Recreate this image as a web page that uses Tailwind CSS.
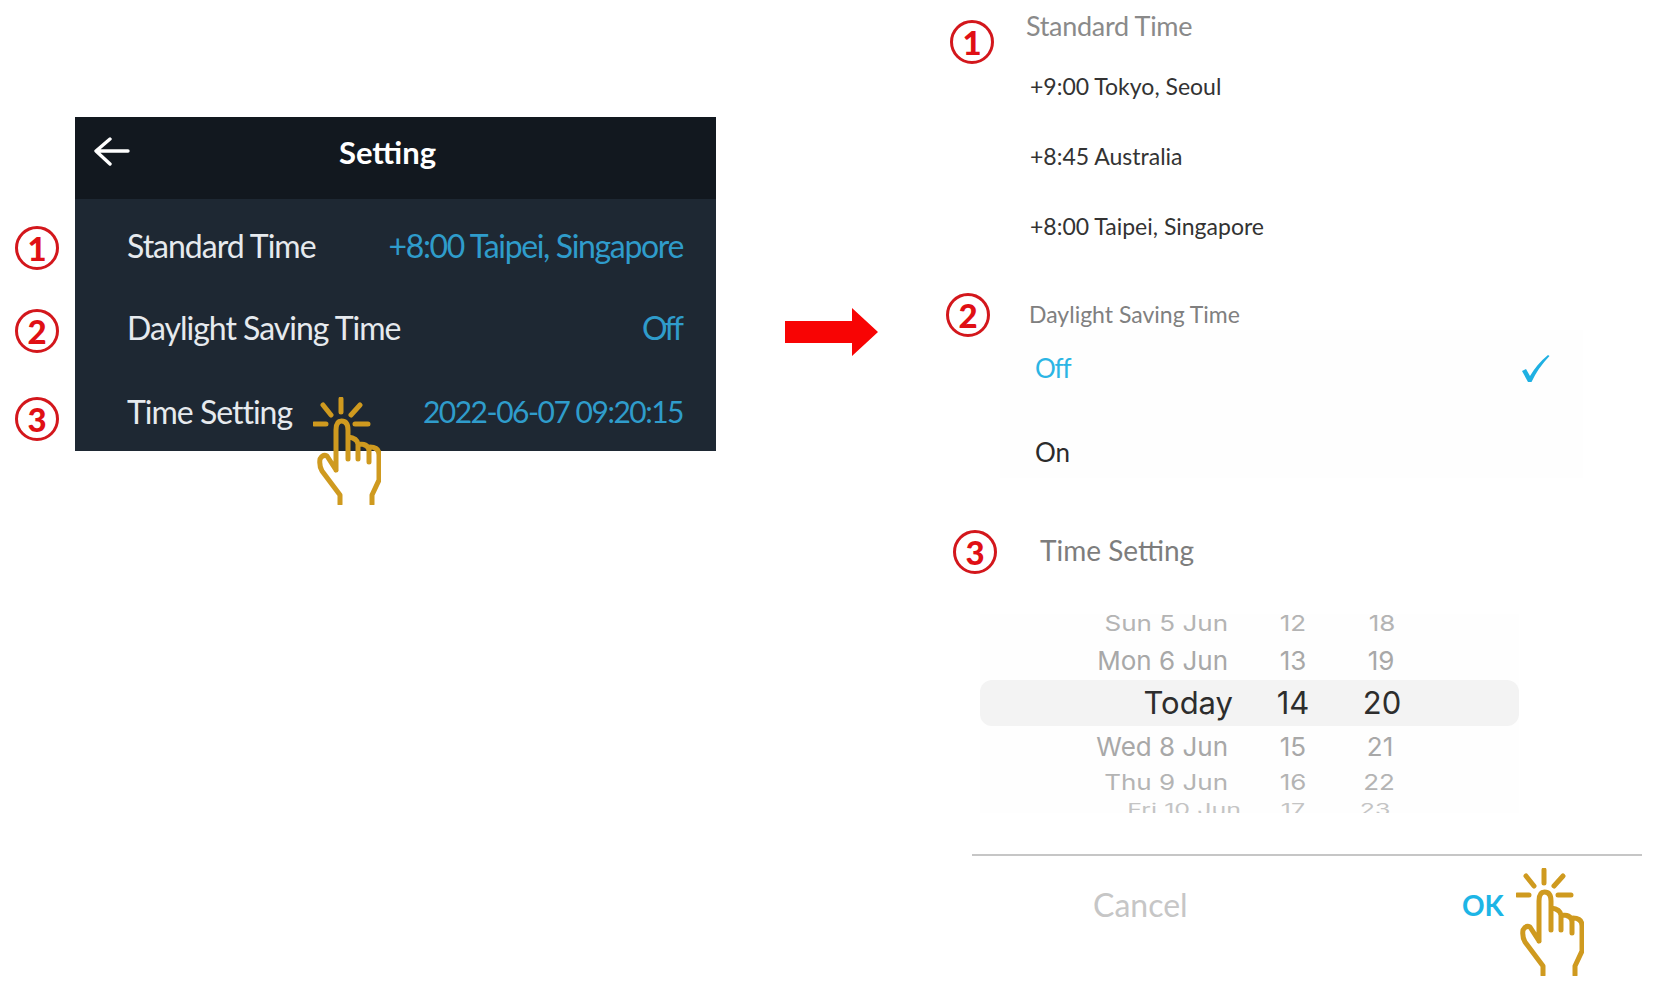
<!DOCTYPE html>
<html>
<head>
<meta charset="utf-8">
<script src="https://cdn.jsdelivr.net/npm/@tailwindcss/browser@4"></script>
</head>
<body class="bg-white">
<div class="relative w-[1660px] h-[996px] overflow-hidden flex bg-white font-['Lato',sans-serif]">

  <!-- Left: device screen -->
  <section class="w-[785px] shrink-0 pt-[117px] pl-[75px]">
    <div class="w-[641px] h-[334px] bg-[#1e2833]">
      <header class="relative h-[82px] bg-[#12181f] flex items-center justify-center pb-[12px] pr-[16px] text-white">
        <svg class="absolute left-[19px] top-[20px]" width="36" height="30" viewBox="0 0 36 30" fill="none" stroke="#ffffff" stroke-width="3.4" stroke-linecap="round" stroke-linejoin="round"><path d="M34 14H3M16 2 2 14l14 13"/></svg>
        <h1 class="text-[31px] font-bold leading-none">Setting</h1>
      </header>
      <div class="pt-[6px] pl-[52px] pr-[33px] text-[32px] tracking-[-1px]">
        <div class="relative h-[82px] flex items-center justify-between">
          <span class="absolute -left-[112px] top-[21px] w-[44px] h-[44px] rounded-full border-[3.5px] border-[#d3171c] flex items-center justify-center text-[#e00f14] text-[33px] font-black tracking-normal leading-none">1</span>
          <span class="text-[#e6eaee]">Standard Time</span>
          <span class="text-[#2f9ccb] tracking-[-1.35px]">+8:00 Taipei, Singapore</span>
        </div>
        <div class="relative h-[82px] flex items-center justify-between">
          <span class="absolute -left-[112px] top-[22px] w-[44px] h-[44px] rounded-full border-[3.5px] border-[#d3171c] flex items-center justify-center text-[#e00f14] text-[33px] font-black tracking-normal leading-none">2</span>
          <span class="text-[#e6eaee]">Daylight Saving Time</span>
          <span class="text-[#2f9ccb] tracking-[-3px] pr-[2px]">Off</span>
        </div>
        <div class="relative h-[85px] flex items-center justify-between">
          <span class="absolute -left-[112px] top-[28px] w-[44px] h-[44px] rounded-full border-[3.5px] border-[#d3171c] flex items-center justify-center text-[#e00f14] text-[33px] font-black tracking-normal leading-none">3</span>
          <span class="text-[#e6eaee]">Time Setting</span>
          <span class="text-[#2f9ccb] text-[30px] tracking-[-1.5px]">2022-06-07 09:20:15</span>
        </div>
      </div>
    </div>
  </section>

  <!-- Red arrow -->
  <div class="w-[161px] shrink-0 pt-[308px]">
    <svg width="93" height="48" viewBox="0 0 93 48"><path d="M0 13H67V0L93 24 67 48V35H0Z" fill="#f80404"/></svg>
  </div>

  <!-- Right: phone settings -->
  <section class="relative w-[714px] shrink-0">
    <div class="relative h-[52px] pl-[80px] flex items-center text-[27px] text-[#8a8a8a] tracking-[-0.3px]">
      <span class="absolute left-[4px] top-[20px] w-[44px] h-[44px] rounded-full border-[3.5px] border-[#d3171c] flex items-center justify-center text-[#e00f14] text-[33px] font-black tracking-normal leading-none">1</span>
      Standard Time
    </div>
    <ul class="pl-[84px] text-[23px] text-[#333333]">
      <li class="h-[70px] flex items-center pb-[2px]">+9:00 Tokyo, Seoul</li>
      <li class="h-[70px] flex items-center pb-[2px]">+8:45 Australia</li>
      <li class="h-[70px] flex items-center pb-[2px]">+8:00 Taipei, Singapore</li>
    </ul>

    <div class="relative mt-[38px] h-[30px] pl-[83px] flex items-center text-[23px] text-[#808080] pb-[2px]">
      <span class="absolute left-0 -top-[7px] w-[44px] h-[44px] rounded-full border-[3.5px] border-[#d3171c] flex items-center justify-center text-[#e00f14] text-[33px] font-black tracking-normal leading-none">2</span>
      Daylight Saving Time
    </div>
    <div class="ml-[54px] w-[583px] bg-[#fefefe] text-[26px]">
      <div class="h-[76px] pl-[35px] pr-[33px] flex items-center justify-between text-[#2bb5e4]">
        <span class="tracking-[-1.2px]">Off</span>
        <svg width="29" height="28" viewBox="0 0 29 28"><path d="M1 17 5 15 9 22Q16 10 27 1L28.500 2Q17 14 10.500 28H7Z" fill="#1fb0e2"/></svg>
      </div>
      <div class="h-[72px] pt-[20px] pl-[35px] flex items-center text-[#2b2b2b]">On</div>
    </div>

    <div class="relative mt-[52px] h-[40px] pl-[94px] flex items-center text-[28px] text-[#7d7d7d]">
      <span class="absolute left-[7px] top-0 w-[44px] h-[44px] rounded-full border-[3.5px] border-[#d3171c] flex items-center justify-center text-[#e00f14] text-[33px] font-black tracking-normal leading-none">3</span>
      Time Setting
    </div>

    <div class="relative mt-[44px] ml-[34px] w-[539px] h-[199px] overflow-hidden bg-[#fefefe] font-['Inter',sans-serif] text-[#a8a8a8]">
      <div class="absolute left-0 right-0 top-[66px] h-[46px] rounded-[12px] bg-[#f3f3f3]"></div>
      <div class="relative -mt-[5px]">
        <div class="grid grid-cols-[253px_120px_58px] h-[30px] pb-[13px] -translate-y-[5px] items-center text-[26px] text-[#b4b4b4] scale-y-[0.85]">
          <span class="text-right pr-[5px]">Sun 5 Jun</span><span class="text-center">12</span><span class="text-center">18</span>
        </div>
        <div class="grid grid-cols-[253px_120px_56px] h-[41px] pt-[2px] items-center text-[26px]">
          <span class="text-right pr-[5px]">Mon 6 Jun</span><span class="text-center">13</span><span class="text-center">19</span>
        </div>
        <div class="grid grid-cols-[253px_120px_58px] h-[46px] items-center text-[31px] text-[#2d2d2d]">
          <span class="text-right">Today</span><span class="text-center">14</span><span class="text-center">20</span>
        </div>
        <div class="grid grid-cols-[253px_120px_54px] h-[40px] items-center text-[26px]">
          <span class="text-right pr-[5px]">Wed 8 Jun</span><span class="text-center">15</span><span class="text-center">21</span>
        </div>
        <div class="grid grid-cols-[253px_120px_52px] h-[32px] pb-[10px] -translate-y-[3px] items-center text-[26px] text-[#b4b4b4] scale-y-[0.85]">
          <span class="text-right pr-[5px]">Thu 9 Jun</span><span class="text-center">16</span><span class="text-center">22</span>
        </div>
        <div class="grid grid-cols-[253px_120px_44px] h-[20px] -mt-[4px] items-center text-[25px] text-[#c4c4c4] scale-y-[0.65]">
          <span class="text-right -mr-[8px]">Fri 10 Jun</span><span class="text-center">17</span><span class="text-center">23</span>
        </div>
      </div>
    </div>

    <div class="mt-[41px] ml-[26px] w-[670px] h-[2px] bg-[#c6c6c6]"></div>
    <div class="h-[98px] pl-[147px] flex items-center">
      <span class="w-[369px] text-[32px] text-[#c6c6c6]">Cancel</span>
      <span class="text-[28px] font-bold text-[#1db5e6]">OK</span>
    </div>

    <!-- Hand over the OK button -->
    <svg class="absolute left-[570px] top-[868px]" width="68" height="108" viewBox="0 0 68 108" fill="none" stroke="#cf9a1f" stroke-width="5" stroke-linecap="round" stroke-linejoin="round"><path d="M28 2V15M10 8l8 10M47 8l-9 10M1 27H13M42 27H55M23 73V33Q23 24 28.500 24 35 24 35 33V62M35 40Q44 41 45 47V62M46 47Q56 47 56 54V65M57 50Q66 50 66 58V83L59 98V107M23 73 14 59Q10 57 7 62 6 69 9 74L27 98V107"/></svg>
  </section>

  <!-- Hand over the time setting row -->
  <svg class="absolute left-[313px] top-[397px]" width="68" height="108" viewBox="0 0 68 108" fill="none" stroke="#cf9a1f" stroke-width="5" stroke-linecap="round" stroke-linejoin="round"><path d="M28 2V15M10 8l8 10M47 8l-9 10M1 27H13M42 27H55M23 73V33Q23 24 28.500 24 35 24 35 33V62M35 40Q44 41 45 47V62M46 47Q56 47 56 54V65M57 50Q66 50 66 58V83L59 98V107M23 73 14 59Q10 57 7 62 6 69 9 74L27 98V107"/></svg>
</div>
</body>
</html>
